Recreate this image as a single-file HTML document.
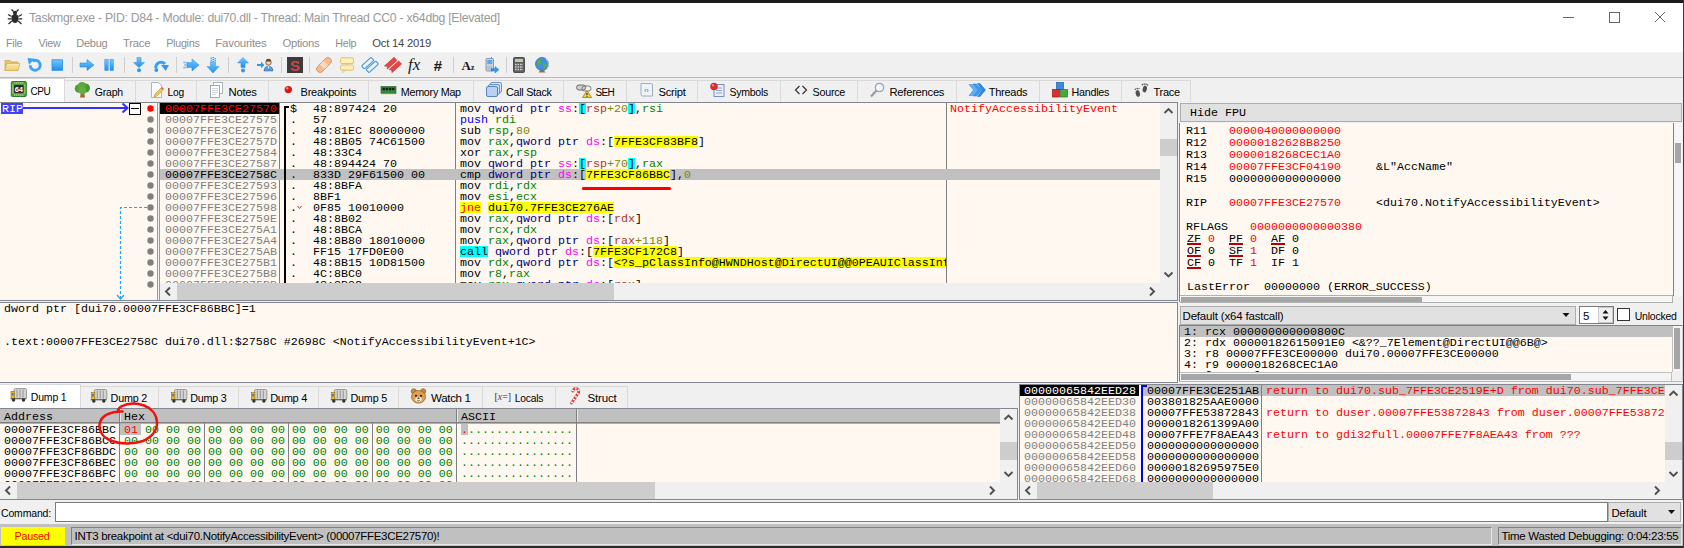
<!DOCTYPE html><html><head><meta charset="utf-8"><title>x64dbg</title><style>
*{box-sizing:border-box;margin:0;padding:0}
html,body{width:1684px;height:548px;overflow:hidden;background:#f0f0f0}
body{position:relative;font-family:"Liberation Sans",sans-serif;font-size:12px;color:#000}
.a{position:absolute}
.m{font-family:"Liberation Mono",monospace;font-size:11.67px;line-height:11px;white-space:pre;letter-spacing:0}
.r{position:absolute;height:11px;line-height:11px;white-space:pre}
.ui{font-family:"Liberation Sans",sans-serif;font-size:12px;white-space:pre}
.tab{position:absolute;top:80px;height:22px;background:#f0f0f0;border:1px solid #d9d9d9;border-bottom:none}
.tab.act{top:78px;height:25px;background:#fff;border-color:#d9d9d9}
.tl{position:absolute;top:8px;font-size:12px;line-height:14px;white-space:pre}
.red{color:#ff0000}.gr{color:#808080}.bl{color:#000}
.y{background:#ffff00}.c{background:#00ffff}
.br{color:#b03434}.k{color:#000080}.rg{color:#008300}.sg{color:#ff00ff}.nm{color:#828200}.pp{color:#0000ff}
.sb{position:absolute;background:#f0f0f0}
.th{position:absolute;background:#cdcdcd}
svg{position:absolute;overflow:visible}
</style></head><body>
<div class="a" style="left:0;top:0;width:1684px;height:3px;background:#1b1b1b"></div>
<div class="a" style="left:0;top:3px;width:1684px;height:50px;background:#fff"></div>
<div class="a" style="left:0;top:52px;width:1684px;height:1px;background:#f5f5f5"></div>
<div class="a ui" style="left:29px;top:10px;font-size:12.25px;line-height:14px;color:#9a9a9a;letter-spacing:-0.268px;line-height:16px;">Taskmgr.exe - PID: D84 - Module: dui70.dll - Thread: Main Thread CC0 - x64dbg [Elevated]</div>
<svg style="left:7px;top:9px" width="16" height="16"><g fill="#2b2b2b" stroke="#2b2b2b"><ellipse cx="8" cy="9.5" rx="3.6" ry="4.6" stroke="none"/><circle cx="8" cy="3.8" r="2.1" stroke="none"/><path d="M4.6 7.5L1 5.5M4.4 9.8H0.8M4.8 12L1.5 15M11.400 7.500L15 5.500M11.600 9.800H15.200M11.200 12L14.500 15M6.500 2.500L4.500 0.500M9.500 2.500L11.500 0.500" stroke-width="1.300" fill="none"/></g></svg>
<svg style="left:1559px;top:8px" width="110" height="20" shape-rendering="crispEdges"><g stroke="#666" stroke-width="1" fill="none"><path d="M4 9.500H15"/><rect x="50.500" y="4.500" width="10" height="10"/></g><path d="M96 4L106 14M106 4L96 14" stroke="#666" stroke-width="1" fill="none" shape-rendering="auto"/></svg>
<div class="a ui" style="left:6px;top:36px;font-size:10.75px;line-height:14px;color:#8e8e8e;letter-spacing:-0.281px;">File</div>
<div class="a ui" style="left:38.5px;top:36px;font-size:10.75px;line-height:14px;color:#8e8e8e;letter-spacing:-0.277px;">View</div>
<div class="a ui" style="left:76.3px;top:36px;font-size:11.0px;line-height:14px;color:#8e8e8e;letter-spacing:-0.243px;">Debug</div>
<div class="a ui" style="left:123px;top:36px;font-size:11.25px;line-height:14px;color:#8e8e8e;letter-spacing:-0.208px;">Trace</div>
<div class="a ui" style="left:166.2px;top:36px;font-size:10.75px;line-height:14px;color:#8e8e8e;letter-spacing:-0.280px;">Plugins</div>
<div class="a ui" style="left:215.3px;top:36px;font-size:11.5px;line-height:14px;color:#8e8e8e;letter-spacing:-0.249px;">Favourites</div>
<div class="a ui" style="left:282.4px;top:36px;font-size:11.25px;line-height:14px;color:#8e8e8e;letter-spacing:-0.253px;">Options</div>
<div class="a ui" style="left:335.3px;top:36px;font-size:10.75px;line-height:14px;color:#8e8e8e;letter-spacing:-0.277px;">Help</div>
<div class="a ui" style="left:372.3px;top:36px;font-size:11.25px;line-height:14px;color:#444;letter-spacing:-0.227px;">Oct 14 2019</div>
<div class="a" style="left:0;top:53px;width:1684px;height:24px;background:#f0f0f0"></div>
<div class="a" style="left:0;top:77px;width:1684px;height:1px;background:#b8b8b8"></div>
<div class="a" style="left:72px;top:57px;width:1px;height:16px;background:#cfcfcf;"></div>
<div class="a" style="left:124px;top:57px;width:1px;height:16px;background:#cfcfcf;"></div>
<div class="a" style="left:176px;top:57px;width:1px;height:16px;background:#cfcfcf;"></div>
<div class="a" style="left:228px;top:57px;width:1px;height:16px;background:#cfcfcf;"></div>
<div class="a" style="left:281px;top:57px;width:1px;height:16px;background:#cfcfcf;"></div>
<div class="a" style="left:309px;top:57px;width:1px;height:16px;background:#cfcfcf;"></div>
<div class="a" style="left:453px;top:57px;width:1px;height:16px;background:#cfcfcf;"></div>
<div class="a" style="left:506px;top:57px;width:1px;height:16px;background:#cfcfcf;"></div>
<svg style="left:0;top:0" width="1684" height="548"><defs><linearGradient id="gb" x1="0" y1="0" x2="0" y2="1"><stop offset="0" stop-color="#74c8ff"/><stop offset="1" stop-color="#1e8ef0"/></linearGradient><linearGradient id="gf" x1="0" y1="0" x2="0" y2="1"><stop offset="0" stop-color="#fbe9b0"/><stop offset="1" stop-color="#efcf7a"/></linearGradient></defs><g transform="translate(4,57)"><path d="M1 3.500h5l1.500 1.500H14v8.500H1z" fill="#e6c36c" stroke="#cfa94e" stroke-width="0.800"/><path d="M0.800 13.500L3 6.500H16l-2.200 7z" fill="url(#gf)" stroke="#d4b05a" stroke-width="0.800"/></g><g transform="translate(27,57)"><path d="M3.200 8.200a5 5 0 1 0 2.200-4.100" fill="none" stroke="#3aa2f4" stroke-width="2.800"/><path d="M0.500 1l7 0.800L2 7.800z" fill="#3aa2f4"/></g><g transform="translate(49,57)"><rect x="3" y="2.800" width="10.500" height="10.500" fill="url(#gb)" stroke="#2a8ee0" stroke-width="0.800"/></g><g transform="translate(79,57)"><path d="M1 6h7V2.500L15 8l-7 5.500V10H1z" fill="url(#gb)" stroke="#2a8ee0" stroke-width="0.600"/></g><g transform="translate(101,57)"><rect x="3.800" y="2.500" width="3.400" height="11" fill="url(#gb)" stroke="#2a8ee0" stroke-width="0.500"/><rect x="9" y="2.500" width="3.400" height="11" fill="url(#gb)" stroke="#2a8ee0" stroke-width="0.500"/></g><g transform="translate(131,57)"><path d="M6 0.500h4v5h3.500L8 10.500 2.500 5.500H6z" fill="url(#gb)" stroke="#2a8ee0" stroke-width="0.500"/><circle cx="8" cy="13.300" r="2" fill="#2e98f2"/></g><g transform="translate(153,57)"><path d="M2.800 11a5.300 5.300 0 0 1 9.200-4" fill="none" stroke="#3aa2f4" stroke-width="3"/><path d="M8 8h8l-3.200 6z" fill="#2e98f2"/><circle cx="3.300" cy="13" r="2" fill="#2e98f2"/></g><g transform="translate(183,57)"><path d="M4 5.500h5V2L16 8l-7 6V10.500H4z" fill="url(#gb)" stroke="#2a8ee0" stroke-width="0.500"/><path d="M0.500 5.500h3M1.500 8h3M0.500 10.500h3" stroke="#3aa2f4" stroke-width="1.600" stroke-dasharray="1.200 0.800"/></g><g transform="translate(205,57)"><path d="M5.500 5h5v4.500h3.500L8 16 2 9.500h3.500z" fill="url(#gb)" stroke="#2a8ee0" stroke-width="0.500"/><path d="M6.300 0.500v4.500M8.300 0v5M10.300 1v4" stroke="#3aa2f4" stroke-width="1.500" stroke-dasharray="1.200 0.800"/></g><g transform="translate(235,57)"><path d="M6 10.500V6H2.500L8 0.500l5.500 5.500H10v4.500z" fill="url(#gb)" stroke="#2a8ee0" stroke-width="0.500"/><circle cx="8" cy="13.500" r="2" fill="#2e98f2"/></g><g transform="translate(257,57)"><path d="M0 7h4V4.800l3.500 3.200L4 11.200V9H0z" fill="#2e98f2"/><circle cx="11.500" cy="5.500" r="2.700" fill="#f0d2ac" stroke="#6a4a2a" stroke-width="0.800"/><path d="M8.800 4.500a2.700 2.700 0 0 1 5.400 0z" fill="#6a4426"/><path d="M7 14c0-3.500 2-4.800 4.500-4.800S16 10.500 16 14z" fill="#5a9ae0" stroke="#2c5f9e" stroke-width="0.500"/><path d="M10.500 9.500l1 2.500 1-2.500z" fill="#fff"/></g><g transform="translate(287,57)"><rect x="0" y="0" width="16" height="16" fill="#3e3a3a"/><text x="8" y="13.500" font-family="Liberation Sans,sans-serif" font-weight="bold" font-size="15" fill="#c8484c" text-anchor="middle">S</text></g><g transform="translate(316,57) rotate(-45 8 8)"><rect x="-1" y="4.500" width="18" height="7" rx="3.400" fill="#f4bc90" stroke="#d48e5a" stroke-width="0.800"/><rect x="5.500" y="4.800" width="5" height="6.400" fill="#f9dcc0"/></g><g transform="translate(338,57)"><rect x="2.500" y="0.800" width="13" height="5.800" rx="1.500" fill="#fdf0b8" stroke="#d8b45a" stroke-width="0.800"/><rect x="2.500" y="8" width="13" height="5.200" rx="1.500" fill="#fdf0b8" stroke="#d8b45a" stroke-width="0.800"/><path d="M5 13.200v2.500L7.500 13.200z" fill="#fdf0b8" stroke="#d8b45a" stroke-width="0.600"/><path d="M9 6.600v1.400" stroke="#d8b45a" stroke-width="1"/></g><g transform="translate(362,57) rotate(-42 8 8)"><rect x="1" y="3" width="13" height="4.200" rx="1" fill="#e8f4fc" stroke="#3f96dc" stroke-width="1.100"/><rect x="2" y="8.800" width="13" height="4.200" rx="1" fill="#e8f4fc" stroke="#3f96dc" stroke-width="1.100"/></g><g transform="translate(385,57) rotate(-42 8 8)"><path d="M1 3h13v4.200H1l1.800-2.100z" fill="#e84444" stroke="#c02222" stroke-width="0.500"/><path d="M2 8.800h13V13H2l1.800-2.100z" fill="#e84444" stroke="#c02222" stroke-width="0.500"/></g><text x="408" y="69.5" font-family="Liberation Serif,serif" font-style="italic" font-size="17" fill="#1a1a1a">fx</text><text x="433.5" y="70.5" font-family="Liberation Sans,sans-serif" font-style="italic" font-weight="bold" font-size="15" fill="#1a1a1a">#</text><text x="461.5" y="70" font-family="Liberation Serif,serif" font-weight="bold" font-size="13" fill="#1a1a1a">A<tspan font-size="7.500">z</tspan></text><g transform="translate(483,57)"><path d="M8.500 0v2" stroke="#7388a0" stroke-width="1"/><rect x="3" y="1.500" width="7.500" height="12.500" rx="1" fill="#c9d6e2" stroke="#7388a0" stroke-width="0.800"/><rect x="4.300" y="3" width="5" height="4" fill="#5aa8ea"/><path d="M4.500 9h4.500M4.500 10.500h4.500M4.500 12h4.500" stroke="#8a9ab0" stroke-width="0.800" stroke-dasharray="1 0.700"/><path d="M8 11.500h4V9.500l4 3.200-4 3.300v-2H8z" fill="#2e98f2" stroke="#1a72c8" stroke-width="0.400"/></g><g transform="translate(511,57)"><rect x="2.500" y="0.500" width="11" height="15" rx="1" fill="#5e5e5e" stroke="#3a3a3a" stroke-width="0.800"/><rect x="4" y="2" width="8" height="3" fill="#b8d0a8"/><path d="M4 7.500h8M4 10h8M4 12.500h8" stroke="#cfcfcf" stroke-width="1.400" stroke-dasharray="1.700 0.800"/></g><g transform="translate(534,57)"><path d="M4.500 15.500h7L10 13.500H6z" fill="#b0642a"/><circle cx="8" cy="7" r="6.500" fill="#3f8ee0" stroke="#2463a8" stroke-width="0.700"/><path d="M3.500 3.500c2-1.500 4-.5 4 1.500S5.500 7 5 9 2.500 7 3.500 3.500zM9 6.500c2-.5 4 .5 3.500 2.500S10.500 12.500 9 11z" fill="#59b045"/><path d="M12 2a7.500 7.500 0 0 1 1 10" fill="none" stroke="#c8c8c8" stroke-width="1"/></g></svg>
<div class="a" style="left:0;top:102px;width:1178px;height:1px;background:#828790"></div>
<div class="a" style="left:0px;top:78px;width:65px;height:24px;background:#fff;border:1px solid #d9d9d9;border-bottom:none;border-left:none"></div>
<div class="a ui" style="left:30.6px;top:85px;font-size:10.0px;line-height:14px;color:#000;letter-spacing:-0.505px;">CPU</div>
<div class="a" style="left:64px;top:80px;width:72px;height:22px;background:#f0f0f0;border:1px solid #d9d9d9;border-bottom:none"></div>
<div class="a ui" style="left:94.8px;top:85px;font-size:10.5px;line-height:14px;color:#000;letter-spacing:-0.197px;">Graph</div>
<div class="a" style="left:135px;top:80px;width:62px;height:22px;background:#f0f0f0;border:1px solid #d9d9d9;border-bottom:none"></div>
<div class="a ui" style="left:167.5px;top:86px;font-size:10.25px;line-height:14px;color:#000;letter-spacing:-0.201px;">Log</div>
<div class="a" style="left:196px;top:80px;width:73px;height:22px;background:#f0f0f0;border:1px solid #d9d9d9;border-bottom:none"></div>
<div class="a ui" style="left:228.6px;top:85px;font-size:11.25px;line-height:14px;color:#000;letter-spacing:-0.298px;">Notes</div>
<div class="a" style="left:268px;top:80px;width:101px;height:22px;background:#f0f0f0;border:1px solid #d9d9d9;border-bottom:none"></div>
<div class="a ui" style="left:300.5px;top:85px;font-size:11.0px;line-height:14px;color:#000;letter-spacing:-0.208px;">Breakpoints</div>
<div class="a" style="left:368px;top:80px;width:106px;height:22px;background:#f0f0f0;border:1px solid #d9d9d9;border-bottom:none"></div>
<div class="a ui" style="left:400.8px;top:85px;font-size:10.75px;line-height:14px;color:#000;letter-spacing:-0.272px;">Memory Map</div>
<div class="a" style="left:473px;top:80px;width:91px;height:22px;background:#f0f0f0;border:1px solid #d9d9d9;border-bottom:none"></div>
<div class="a ui" style="left:506px;top:85px;font-size:10.75px;line-height:14px;color:#000;letter-spacing:-0.269px;">Call Stack</div>
<div class="a" style="left:563px;top:80px;width:64px;height:22px;background:#f0f0f0;border:1px solid #d9d9d9;border-bottom:none"></div>
<div class="a ui" style="left:595.6px;top:86px;font-size:10.0px;line-height:14px;color:#000;letter-spacing:-0.721px;">SEH</div>
<div class="a" style="left:626px;top:80px;width:72px;height:22px;background:#f0f0f0;border:1px solid #d9d9d9;border-bottom:none"></div>
<div class="a ui" style="left:658.5px;top:85px;font-size:11.25px;line-height:14px;color:#000;letter-spacing:-0.276px;">Script</div>
<div class="a" style="left:697px;top:80px;width:84px;height:22px;background:#f0f0f0;border:1px solid #d9d9d9;border-bottom:none"></div>
<div class="a ui" style="left:729.6px;top:85px;font-size:10.5px;line-height:14px;color:#000;letter-spacing:-0.266px;">Symbols</div>
<div class="a" style="left:780px;top:80px;width:78px;height:22px;background:#f0f0f0;border:1px solid #d9d9d9;border-bottom:none"></div>
<div class="a ui" style="left:812.6px;top:85px;font-size:10.75px;line-height:14px;color:#000;letter-spacing:-0.277px;">Source</div>
<div class="a" style="left:857px;top:80px;width:100px;height:22px;background:#f0f0f0;border:1px solid #d9d9d9;border-bottom:none"></div>
<div class="a ui" style="left:889.5px;top:85px;font-size:11.25px;line-height:14px;color:#000;letter-spacing:-0.283px;">References</div>
<div class="a" style="left:956px;top:80px;width:84px;height:22px;background:#f0f0f0;border:1px solid #d9d9d9;border-bottom:none"></div>
<div class="a ui" style="left:988.8px;top:85px;font-size:11.0px;line-height:14px;color:#000;letter-spacing:-0.265px;">Threads</div>
<div class="a" style="left:1039px;top:80px;width:83px;height:22px;background:#f0f0f0;border:1px solid #d9d9d9;border-bottom:none"></div>
<div class="a ui" style="left:1071.4px;top:85px;font-size:10.75px;line-height:14px;color:#000;letter-spacing:-0.235px;">Handles</div>
<div class="a" style="left:1121px;top:80px;width:70px;height:22px;background:#f0f0f0;border:1px solid #d9d9d9;border-bottom:none"></div>
<div class="a ui" style="left:1153.5px;top:85px;font-size:11.0px;line-height:14px;color:#000;letter-spacing:-0.242px;">Trace</div>
<svg style="left:0;top:0" width="1684" height="548"><g transform="translate(10.8,81)"><rect x="0.500" y="0.500" width="15" height="15" rx="1" fill="#3fa045" stroke="#2a7a30"/><path d="M3.500 2h10M3.500 14h10" stroke="#e8df8a" stroke-width="1.400" stroke-dasharray="1 1"/><path d="M2 3.500v10M14 3.500v10" stroke="#e8df8a" stroke-width="1.400" stroke-dasharray="1 1"/><rect x="3.200" y="4" width="9.600" height="8" rx="1" fill="#2c2c2c"/><text x="8" y="10.800" font-size="7.500" font-weight="bold" font-family="Liberation Sans,sans-serif" fill="#fff" text-anchor="middle">64</text></g><g transform="translate(74.5,82)"><path d="M6.500 10h3l1 5.500h-5z" fill="#a0682d"/><circle cx="4.500" cy="6.500" r="4.300" fill="#4f9e34"/><circle cx="11" cy="6" r="4.500" fill="#4a962f"/><circle cx="7.500" cy="4" r="4" fill="#5aa83a"/><circle cx="8" cy="8.500" r="3.800" fill="#62b042"/></g><g transform="translate(149,82)"><path d="M2.500 0.500h7l3 3v12h-10z" fill="#fbfbfb" stroke="#9aa5b0" stroke-width="0.8"/><path d="M5 15l1-3 6-6 2 2-6 6z" fill="#f2c84b" stroke="#a8842a" stroke-width="0.5"/><path d="M12 6l1-1 2 2-1 1z" fill="#e05a5a"/></g><g transform="translate(209,82)"><rect x="4.500" y="0.500" width="9" height="11" fill="#fff" stroke="#9aa5b0" stroke-width="0.8"/><rect x="1.500" y="3.500" width="9" height="12" fill="#fdfdfd" stroke="#8a95a0" stroke-width="0.8"/><path d="M3 6.500h6M3 8.500h6M3 10.500h6M3 12.500h4" stroke="#b8c2cc" stroke-width="0.7"/></g><g transform="translate(280,82)"><circle cx="8.300" cy="7.600" r="3.700" fill="#d81818"/><circle cx="7.200" cy="6.300" r="1.200" fill="#ff8080"/></g><g transform="translate(380.5,82)"><rect x="0.500" y="4.500" width="15" height="7" fill="#2f8a3a" stroke="#1f5f27" stroke-width="0.6"/><path d="M2 7h12.500" stroke="#1c1c1c" stroke-width="2.600" stroke-dasharray="2.400 0.800"/><path d="M1 12h14" stroke="#d8c86a" stroke-width="1" stroke-dasharray="1 1"/></g><g transform="translate(486,82)"><rect x="4.500" y="0.500" width="11" height="10" rx="1.500" fill="#dfe9f7" stroke="#5a86c8" stroke-width="0.9"/><rect x="2.500" y="2.500" width="11" height="10" rx="1.500" fill="#cfe0f5" stroke="#5a86c8" stroke-width="0.9"/><rect x="0.500" y="4.500" width="11" height="10" rx="1.500" fill="#b9d2f0" stroke="#4a76b8" stroke-width="0.9"/></g><g transform="translate(576,82)"><rect x="0.600" y="3" width="9" height="5" rx="2.400" fill="#d0d0d0" stroke="#6a6a6a" stroke-width="1"/><rect x="6" y="4" width="9" height="5" rx="2.400" fill="none" stroke="#7a7a7a" stroke-width="1"/><path d="M11 8.500l4.500 7h-9z" fill="#f6d33a" stroke="#8a6a10" stroke-width="0.700"/><path d="M11 11v2.200M11 14v0.800" stroke="#222" stroke-width="1.100"/></g><g transform="translate(638.5,82)"><path d="M2.500 1.500h10q1.500 0 1.500 1.500v11h-10q-1.500 0-1.500-1.500z" fill="#eef3f9" stroke="#8a9ab0" stroke-width="0.8"/><text x="8" y="11" font-size="6.500" font-family="Liberation Sans,sans-serif" fill="#556" text-anchor="middle">‹›</text></g><g transform="translate(709.5,82)"><rect x="4.500" y="2.500" width="10" height="12" fill="#e8effa" stroke="#5a78b8" stroke-width="0.8"/><path d="M6.500 6h6M6.500 8.500h6M6.500 11h6" stroke="#7a92c8" stroke-width="0.8"/><circle cx="4.500" cy="4.500" r="3.800" fill="#d83030"/><circle cx="3.500" cy="3.300" r="1.100" fill="#ff9a9a"/></g><g transform="translate(793,82)"><path d="M6.500 4L2.500 8 6.500 12M9.500 4L13.500 8 9.500 12" fill="none" stroke="#333" stroke-width="1.200"/></g><g transform="translate(870,82)"><circle cx="9.500" cy="5.500" r="4.200" fill="#f2f6fa" stroke="#9aa5b0" stroke-width="1.200"/><path d="M6.500 8.500L1 14.500" stroke="#9a9a9a" stroke-width="2.200"/></g><g transform="translate(969,82)"><path d="M0 2.500h3.500l5 5.500-5 5.500H0l4.500-5.500z" fill="#5ab4f8" stroke="#2a86d8" stroke-width="0.500"/><path d="M4 2h3.500l5.500 6-5.500 6H4l5-6z" fill="#3a9af0" stroke="#1f72c4" stroke-width="0.500"/><path d="M8.500 1.500h2.500l5.500 6.500-5.500 6.500H8.500l5-6.500z" fill="#2a8ae8" stroke="#1a62b4" stroke-width="0.500"/></g><g transform="translate(1052,82)"><rect x="4.500" y="0.500" width="7" height="7" fill="#3a8ae0" stroke="#1f5fa8" stroke-width="0.700"/><rect x="0.500" y="7.500" width="7" height="7.500" fill="#d83030" stroke="#981818" stroke-width="0.700"/><rect x="8.500" y="7.500" width="7" height="7.500" fill="#4aa83a" stroke="#2a7820" stroke-width="0.700"/></g><g transform="translate(1134,82)"><ellipse cx="3.800" cy="11.500" rx="2.100" ry="3.400" fill="#505050" transform="rotate(-12 3.800 11.500)"/><ellipse cx="10.800" cy="7" rx="2.100" ry="3.400" fill="#505050" transform="rotate(12 10.800 7)"/><circle cx="1.300" cy="7.300" r="0.800" fill="#505050"/><circle cx="3.200" cy="6.600" r="0.800" fill="#505050"/><circle cx="5" cy="6.600" r="0.700" fill="#505050"/><circle cx="8.500" cy="2.600" r="0.800" fill="#505050"/><circle cx="10.300" cy="2" r="0.800" fill="#505050"/><circle cx="12.100" cy="2.200" r="0.800" fill="#505050"/><circle cx="13.600" cy="3" r="0.700" fill="#505050"/></g></svg>
<div class="a" style="left:0;top:103px;width:1177px;height:197px;background:#fff8f0"></div>
<div class="a" style="left:157px;top:103px;width:1px;height:197px;background:#9a9a9a;"></div>
<div class="a" style="left:158px;top:103px;width:1px;height:197px;background:#f0f0f0;"></div>
<div class="a" style="left:159px;top:103px;width:1px;height:197px;background:#9a9a9a;"></div>
<div class="a" style="left:279px;top:103px;width:1px;height:180px;background:#808080;"></div>
<div class="a" style="left:455px;top:103px;width:1px;height:180px;background:#808080;"></div>
<div class="a" style="left:946px;top:103px;width:1px;height:180px;background:#808080;"></div>
<div class="a" style="left:160px;top:169px;width:1000px;height:11px;background:#c0c0c0;"></div>
<div class="a" style="left:160px;top:103px;width:119px;height:11px;background:#000;"></div>
<div class="a" style="left:0;top:103px;width:1160px;height:180px;overflow:hidden">
<div class="r m red" style="left:165px;top:1px;">00007FFE3CE27570</div>
<div class="r m bl" style="left:290px;top:1px;">$</div>
<div class="r m bl" style="left:313px;top:1px;">48:897424 20</div>
<div class="r m red" style="left:950px;top:1px;">NotifyAccessibilityEvent</div>
<div class="r m gr" style="left:165px;top:12px;">00007FFE3CE27575</div>
<div class="r m bl" style="left:290px;top:12px;">.</div>
<div class="r m bl" style="left:313px;top:12px;">57</div>
<div class="r m gr" style="left:165px;top:23px;">00007FFE3CE27576</div>
<div class="r m bl" style="left:290px;top:23px;">.</div>
<div class="r m bl" style="left:313px;top:23px;">48:81EC 80000000</div>
<div class="r m gr" style="left:165px;top:34px;">00007FFE3CE2757D</div>
<div class="r m bl" style="left:290px;top:34px;">.</div>
<div class="r m bl" style="left:313px;top:34px;">48:8B05 74C61500</div>
<div class="r m gr" style="left:165px;top:45px;">00007FFE3CE27584</div>
<div class="r m bl" style="left:290px;top:45px;">.</div>
<div class="r m bl" style="left:313px;top:45px;">48:33C4</div>
<div class="r m gr" style="left:165px;top:56px;">00007FFE3CE27587</div>
<div class="r m bl" style="left:290px;top:56px;">.</div>
<div class="r m bl" style="left:313px;top:56px;">48:894424 70</div>
<div class="r m bl" style="left:165px;top:67px;">00007FFE3CE2758C</div>
<div class="r m bl" style="left:290px;top:67px;">.</div>
<div class="r m bl" style="left:313px;top:67px;">833D 29F61500 00</div>
<div class="r m gr" style="left:165px;top:78px;">00007FFE3CE27593</div>
<div class="r m bl" style="left:290px;top:78px;">.</div>
<div class="r m bl" style="left:313px;top:78px;">48:8BFA</div>
<div class="r m gr" style="left:165px;top:89px;">00007FFE3CE27596</div>
<div class="r m bl" style="left:290px;top:89px;">.</div>
<div class="r m bl" style="left:313px;top:89px;">8BF1</div>
<div class="r m gr" style="left:165px;top:100px;">00007FFE3CE27598</div>
<div class="r m bl" style="left:290px;top:100px;">.</div>
<div class="r m bl" style="left:313px;top:100px;">0F85 10010000</div>
<div class="r m gr" style="left:165px;top:111px;">00007FFE3CE2759E</div>
<div class="r m bl" style="left:290px;top:111px;">.</div>
<div class="r m bl" style="left:313px;top:111px;">48:8B02</div>
<div class="r m gr" style="left:165px;top:122px;">00007FFE3CE275A1</div>
<div class="r m bl" style="left:290px;top:122px;">.</div>
<div class="r m bl" style="left:313px;top:122px;">48:8BCA</div>
<div class="r m gr" style="left:165px;top:133px;">00007FFE3CE275A4</div>
<div class="r m bl" style="left:290px;top:133px;">.</div>
<div class="r m bl" style="left:313px;top:133px;">48:8B80 18010000</div>
<div class="r m gr" style="left:165px;top:144px;">00007FFE3CE275AB</div>
<div class="r m bl" style="left:290px;top:144px;">.</div>
<div class="r m bl" style="left:313px;top:144px;">FF15 17FD0E00</div>
<div class="r m gr" style="left:165px;top:155px;">00007FFE3CE275B1</div>
<div class="r m bl" style="left:290px;top:155px;">.</div>
<div class="r m bl" style="left:313px;top:155px;">48:8B15 10D81500</div>
<div class="r m gr" style="left:165px;top:166px;">00007FFE3CE275B8</div>
<div class="r m bl" style="left:290px;top:166px;">.</div>
<div class="r m bl" style="left:313px;top:166px;">4C:8BC0</div>
<div class="r m gr" style="left:165px;top:177px;">00007FFE3CE275BB</div>
<div class="r m bl" style="left:290px;top:177px;">.</div>
<div class="r m bl" style="left:313px;top:177px;">48:8B02</div>
</div>
<div class="a" style="left:460px;top:103px;width:486px;height:180px;overflow:hidden"><div class="a" style="left:119px;top:0px;width:7px;height:11px;background:#00ffff;"></div><div class="a" style="left:168px;top:0px;width:7px;height:11px;background:#00ffff;"></div><div class="r m " style="left:0px;top:1px;"><span class="bl">mov </span><span class="k">qword ptr </span><span class="sg">ss</span><span class="bl">:</span><span class="bl">[</span><span class="br">rsp</span><span class="nm">+20</span><span class="bl">]</span><span class="bl">,</span><span class="rg">rsi</span></div><div class="r m " style="left:0px;top:12px;"><span class="pp">push </span><span class="rg">rdi</span></div><div class="r m " style="left:0px;top:23px;"><span class="bl">sub </span><span class="rg">rsp</span><span class="bl">,</span><span class="nm">80</span></div><div class="a" style="left:154px;top:33px;width:84px;height:11px;background:#ffff00;"></div><div class="r m " style="left:0px;top:34px;"><span class="bl">mov </span><span class="rg">rax</span><span class="bl">,</span><span class="k">qword ptr </span><span class="sg">ds</span><span class="bl">:</span><span class="bl">[</span><span class="bl">7FFE3CF83BF8</span><span class="bl">]</span></div><div class="r m " style="left:0px;top:45px;"><span class="bl">xor </span><span class="rg">rax</span><span class="bl">,</span><span class="rg">rsp</span></div><div class="a" style="left:119px;top:55px;width:7px;height:11px;background:#00ffff;"></div><div class="a" style="left:168px;top:55px;width:7px;height:11px;background:#00ffff;"></div><div class="r m " style="left:0px;top:56px;"><span class="bl">mov </span><span class="k">qword ptr </span><span class="sg">ss</span><span class="bl">:</span><span class="bl">[</span><span class="br">rsp</span><span class="nm">+70</span><span class="bl">]</span><span class="bl">,</span><span class="rg">rax</span></div><div class="a" style="left:126px;top:66px;width:84px;height:11px;background:#ffff00;"></div><div class="r m " style="left:0px;top:67px;"><span class="bl">cmp </span><span class="k">dword ptr </span><span class="sg">ds</span><span class="bl">:</span><span class="bl">[</span><span class="bl">7FFE3CF86BBC</span><span class="bl">]</span><span class="bl">,</span><span class="nm">0</span></div><div class="r m " style="left:0px;top:78px;"><span class="bl">mov </span><span class="rg">rdi</span><span class="bl">,</span><span class="rg">rdx</span></div><div class="r m " style="left:0px;top:89px;"><span class="bl">mov </span><span class="rg">esi</span><span class="bl">,</span><span class="rg">ecx</span></div><div class="a" style="left:0px;top:99px;width:21px;height:11px;background:#ffff00;"></div><div class="a" style="left:28px;top:99px;width:126px;height:11px;background:#ffff00;"></div><div class="r m " style="left:0px;top:100px;"><span class="red">jne</span><span class="bl"> </span><span class="bl">dui70.7FFE3CE276AE</span></div><div class="r m " style="left:0px;top:111px;"><span class="bl">mov </span><span class="rg">rax</span><span class="bl">,</span><span class="k">qword ptr </span><span class="sg">ds</span><span class="bl">:</span><span class="bl">[</span><span class="br">rdx</span><span class="bl">]</span></div><div class="r m " style="left:0px;top:122px;"><span class="bl">mov </span><span class="rg">rcx</span><span class="bl">,</span><span class="rg">rdx</span></div><div class="r m " style="left:0px;top:133px;"><span class="bl">mov </span><span class="rg">rax</span><span class="bl">,</span><span class="k">qword ptr </span><span class="sg">ds</span><span class="bl">:</span><span class="bl">[</span><span class="br">rax</span><span class="nm">+118</span><span class="bl">]</span></div><div class="a" style="left:0px;top:143px;width:28px;height:11px;background:#00ffff;"></div><div class="a" style="left:133px;top:143px;width:84px;height:11px;background:#ffff00;"></div><div class="r m " style="left:0px;top:144px;"><span class="bl">call</span><span class="bl"> </span><span class="k">qword ptr </span><span class="sg">ds</span><span class="bl">:</span><span class="bl">[</span><span class="bl">7FFE3CF172C8</span><span class="bl">]</span></div><div class="a" style="left:154px;top:154px;width:336px;height:11px;background:#ffff00;"></div><div class="r m " style="left:0px;top:155px;"><span class="bl">mov </span><span class="rg">rdx</span><span class="bl">,</span><span class="k">qword ptr </span><span class="sg">ds</span><span class="bl">:</span><span class="bl">[</span><span class="bl">&lt;?s_pClassInfo@HWNDHost@DirectUI@@0PEAUIClassInf</span></div><div class="r m " style="left:0px;top:166px;"><span class="bl">mov </span><span class="rg">r8</span><span class="bl">,</span><span class="rg">rax</span></div><div class="r m " style="left:0px;top:177px;"><span class="bl">mov </span><span class="rg">rax</span><span class="bl">,</span><span class="k">qword ptr </span><span class="sg">ds</span><span class="bl">:</span><span class="bl">[</span><span class="br">rax</span><span class="bl">]</span></div></div>
<div class="a" style="left:1px;top:103px;width:22px;height:11px;background:#4040ff;"></div>
<div class="r m " style="left:2px;top:104px;color:#fff">RIP</div>
<div class="a" style="left:1160px;top:103px;width:17px;height:197px;background:#f0f0f0;"></div>
<div class="a" style="left:1160px;top:139px;width:17px;height:17px;background:#cdcdcd;"></div>
<div class="a" style="left:160px;top:283px;width:1000px;height:17px;background:#f0f0f0;"></div>
<div class="a" style="left:177px;top:283px;width:437px;height:17px;background:#cdcdcd;"></div>
<div class="a" style="left:1177px;top:102px;width:1px;height:199px;background:#828790;"></div>
<div class="a" style="left:0px;top:300px;width:1178px;height:1px;background:#828790;"></div>
<svg style="left:0;top:0" width="1684" height="548"><path d="M297.500 206l2 2.500 2-2.500" stroke="#e02020" stroke-width="1" fill="none"/><path d="M23 108H127" stroke="#3030ff" stroke-width="2"/><path d="M122.500 103.500L127.500 108L122.500 112.500" stroke="#3030ff" stroke-width="2" fill="none"/><g shape-rendering="crispEdges"><rect x="129.500" y="103.500" width="11" height="11" fill="#fff" stroke="#000"/><path d="M131 108.500H139" stroke="#000" stroke-width="1"/></g><circle cx="150.500" cy="108.5" r="3.200" fill="#ff0000"/><circle cx="150.500" cy="119.5" r="3.200" fill="#808080"/><circle cx="150.500" cy="130.5" r="3.200" fill="#808080"/><circle cx="150.500" cy="141.5" r="3.200" fill="#808080"/><circle cx="150.500" cy="152.5" r="3.200" fill="#808080"/><circle cx="150.500" cy="163.5" r="3.200" fill="#808080"/><circle cx="150.500" cy="174.5" r="3.200" fill="#808080"/><circle cx="150.500" cy="185.5" r="3.200" fill="#808080"/><circle cx="150.500" cy="196.5" r="3.200" fill="#808080"/><circle cx="150.500" cy="207.5" r="3.200" fill="#808080"/><circle cx="150.500" cy="218.5" r="3.200" fill="#808080"/><circle cx="150.500" cy="229.5" r="3.200" fill="#808080"/><circle cx="150.500" cy="240.5" r="3.200" fill="#808080"/><circle cx="150.500" cy="251.5" r="3.200" fill="#808080"/><circle cx="150.500" cy="262.5" r="3.200" fill="#808080"/><circle cx="150.500" cy="273.5" r="3.200" fill="#808080"/><circle cx="150.500" cy="284.5" r="3.200" fill="#808080"/><path d="M147 207.500H120.500V298" stroke="#18a8ff" stroke-width="1.200" stroke-dasharray="3 2" fill="none"/><path d="M117 295L120.500 299L124 295" stroke="#18a8ff" stroke-width="1.200" fill="none"/><path d="M289 107H285V283" stroke="#000" stroke-width="2" fill="none" shape-rendering="crispEdges"/><path d="M583.500 188.500H669.500" stroke="#ff0000" stroke-width="3.200" fill="none" stroke-linecap="round"/><path d="M1164.5 113L1168.5 109L1172.5 113" stroke="#505050" stroke-width="1.900" fill="none"/><path d="M1164.5 272.5L1168.5 276.5L1172.5 272.5" stroke="#505050" stroke-width="1.900" fill="none"/><path d="M170 287.5L166 291.5L170 295.5" stroke="#505050" stroke-width="1.900" fill="none"/><path d="M1150 287.5L1154 291.5L1150 295.5" stroke="#505050" stroke-width="1.900" fill="none"/></svg>
<div class="a" style="left:1180px;top:103px;width:502px;height:19px;background:#e1e1e1;border:1px solid #adadad"></div>
<div class="r m bl" style="left:1190px;top:108px;">Hide FPU</div>
<div class="a" style="left:1180px;top:123px;width:493px;height:172px;background:#fff8f0;"></div>
<div class="a" style="left:1179px;top:123px;width:1px;height:179px;background:#808080;"></div>
<div class="r m bl" style="left:1186px;top:126px;">R11</div>
<div class="r m red" style="left:1229px;top:126px;">0000040000000000</div>
<div class="r m bl" style="left:1186px;top:138px;">R12</div>
<div class="r m red" style="left:1229px;top:138px;">00000182628B8250</div>
<div class="r m bl" style="left:1186px;top:150px;">R13</div>
<div class="r m red" style="left:1229px;top:150px;">0000018268CEC1A0</div>
<div class="r m bl" style="left:1186px;top:162px;">R14</div>
<div class="r m red" style="left:1229px;top:162px;">00007FFE3CF04190</div>
<div class="r m bl" style="left:1376px;top:162px;">&amp;L"AccName"</div>
<div class="r m bl" style="left:1186px;top:174px;">R15</div>
<div class="r m bl" style="left:1229px;top:174px;">0000000000000000</div>
<div class="r m bl" style="left:1186px;top:198px;">RIP</div>
<div class="r m red" style="left:1229px;top:198px;">00007FFE3CE27570</div>
<div class="r m bl" style="left:1376px;top:198px;">&lt;dui70.NotifyAccessibilityEvent&gt;</div>
<div class="r m bl" style="left:1186px;top:222px;">RFLAGS</div>
<div class="r m red" style="left:1250px;top:222px;">0000000000000380</div>
<div class="r m bl" style="left:1187px;top:234px;">ZF</div>
<div class="r m red" style="left:1208px;top:234px;">0</div>
<div class="r m bl" style="left:1229px;top:234px;">PF</div>
<div class="r m red" style="left:1250px;top:234px;">0</div>
<div class="r m bl" style="left:1271px;top:234px;">AF</div>
<div class="r m bl" style="left:1292px;top:234px;">0</div>
<div class="r m bl" style="left:1187px;top:246px;">OF</div>
<div class="r m bl" style="left:1208px;top:246px;">0</div>
<div class="r m bl" style="left:1229px;top:246px;">SF</div>
<div class="r m red" style="left:1250px;top:246px;">1</div>
<div class="r m bl" style="left:1271px;top:246px;">DF</div>
<div class="r m bl" style="left:1292px;top:246px;">0</div>
<div class="r m bl" style="left:1187px;top:258px;">CF</div>
<div class="r m bl" style="left:1208px;top:258px;">0</div>
<div class="r m bl" style="left:1229px;top:258px;">TF</div>
<div class="r m red" style="left:1250px;top:258px;">1</div>
<div class="r m bl" style="left:1271px;top:258px;">IF</div>
<div class="r m bl" style="left:1292px;top:258px;">1</div>
<div class="r m bl" style="left:1187px;top:282px;">LastError  00000000 (ERROR_SUCCESS)</div>
<div class="a" style="left:1673px;top:123px;width:9px;height:173px;background:#f6f6f6;border-left:1px solid #808080"></div>
<div class="a" style="left:1675px;top:143px;width:6px;height:20px;background:#a6a6a6;"></div>
<div class="a" style="left:1180px;top:295px;width:493px;height:8px;background:#f6f6f6;border:1px solid #b0b0b0;border-left:none"></div>
<div class="a" style="left:1181px;top:297px;width:241px;height:5px;background:#a6a6a6;"></div>
<svg style="left:0;top:0" width="1684" height="548"><path d="M1187 244H1201" stroke="#b40000" stroke-width="2"/><path d="M1229 244H1243" stroke="#b40000" stroke-width="2"/><path d="M1271 244H1285" stroke="#b40000" stroke-width="2"/><path d="M1187 256H1201" stroke="#b40000" stroke-width="2"/><path d="M1229 256H1243" stroke="#b40000" stroke-width="2"/><path d="M1187 268H1201" stroke="#b40000" stroke-width="2"/></svg>
<div class="a" style="left:0px;top:303px;width:1177px;height:79px;background:#fff8f0;"></div>
<div class="a" style="left:0px;top:302px;width:1178px;height:1px;background:#828790;"></div>
<div class="a" style="left:1177px;top:302px;width:1px;height:81px;background:#828790;"></div>
<div class="a" style="left:0px;top:382px;width:1178px;height:1px;background:#828790;"></div>
<div class="r m bl" style="left:4px;top:304px;">dword ptr [dui70.00007FFE3CF86BBC]=1</div>
<div class="r m bl" style="left:4px;top:337px;">.text:00007FFE3CE2758C dui70.dll:$2758C #2698C &lt;NotifyAccessibilityEvent+1C&gt;</div>
<div class="a" style="left:1180px;top:306px;width:396px;height:19px;background:#e1e1e1;border:1px solid #adadad"></div>
<div class="a ui" style="left:1182.5px;top:309px;font-size:11.5px;line-height:14px;color:#000;letter-spacing:-0.174px;">Default (x64 fastcall)</div>
<div class="a" style="left:1579px;top:306px;width:35px;height:18px;background:#fff;border:1px solid #7a7a7a"></div>
<div class="a ui" style="left:1583px;top:309px;font-size:11.5px;line-height:14px;color:#000;">5</div>
<div class="a" style="left:1598px;top:307px;width:15px;height:16px;background:#f0f0f0;border:1px solid #c8c8c8"></div>
<div class="a" style="left:1617px;top:308px;width:13px;height:13px;background:#fff;border:1px solid #333"></div>
<div class="a ui" style="left:1634.7px;top:309px;font-size:10.5px;line-height:14px;color:#000;letter-spacing:-0.222px;">Unlocked</div>
<div class="a" style="left:1180px;top:326px;width:492px;height:46px;background:#fff8f0;"></div>
<div class="a" style="left:1179px;top:325px;width:504px;height:1px;background:#808080;"></div>
<div class="a" style="left:1179px;top:325px;width:1px;height:57px;background:#808080;"></div>
<div class="a" style="left:1180px;top:326px;width:492px;height:11px;background:#c0c0c0;"></div>
<div class="a" style="left:1180px;top:326px;width:492px;height:46px;overflow:hidden">
<div class="r m bl" style="left:4px;top:1px;">1: rcx 000000000000800C</div>
<div class="r m bl" style="left:4px;top:12px;">2: rdx 00000182615091E0 &lt;&amp;??_7Element@DirectUI@@6B@&gt;</div>
<div class="r m bl" style="left:4px;top:23px;">3: r8 00007FFE3CE00000 dui70.00007FFE3CE00000</div>
<div class="r m bl" style="left:4px;top:34px;">4: r9 0000018268CEC1A0</div>
<div class="r m bl" style="left:4px;top:45px;">5: [rsp+28] 0000000000000000</div>
</div>
<div class="a" style="left:1672px;top:326px;width:10px;height:46px;background:#f4f4f4;border-left:1px solid #c0c0c0"></div>
<div class="a" style="left:1674px;top:328px;width:6px;height:41px;background:#a6a6a6;"></div>
<div class="a" style="left:1180px;top:372px;width:492px;height:9px;background:#f4f4f4;border-top:1px solid #c0c0c0;border-right:1px solid #c0c0c0"></div>
<div class="a" style="left:1181px;top:374px;width:390px;height:6px;background:#a6a6a6;"></div>
<div class="a" style="left:1179px;top:381px;width:504px;height:1px;background:#b8b8b8;"></div>
<div class="a" style="left:1682px;top:325px;width:1px;height:57px;background:#d0d0d0;"></div>
<svg style="left:0;top:0" width="1684" height="548"><path d="M1562.500 313h7l-3.500 4z" fill="#111"/><path d="M1602.500 313.500l3-3.500 3 3.500zM1602.500 316.500l3 3.500 3-3.500z" fill="#111"/></svg>
<div class="a" style="left:0px;top:384px;width:81px;height:24px;background:#fff;border:1px solid #d9d9d9;border-bottom:none;border-left:none"></div>
<div class="a" style="left:80px;top:386px;width:79px;height:22px;background:#f0f0f0;border:1px solid #d9d9d9;border-bottom:none"></div>
<div class="a" style="left:158px;top:386px;width:81px;height:22px;background:#f0f0f0;border:1px solid #d9d9d9;border-bottom:none"></div>
<div class="a" style="left:238px;top:386px;width:81px;height:22px;background:#f0f0f0;border:1px solid #d9d9d9;border-bottom:none"></div>
<div class="a" style="left:318px;top:386px;width:81px;height:22px;background:#f0f0f0;border:1px solid #d9d9d9;border-bottom:none"></div>
<div class="a" style="left:398px;top:386px;width:85px;height:22px;background:#f0f0f0;border:1px solid #d9d9d9;border-bottom:none"></div>
<div class="a" style="left:482px;top:386px;width:74px;height:22px;background:#f0f0f0;border:1px solid #d9d9d9;border-bottom:none"></div>
<div class="a" style="left:555px;top:386px;width:73px;height:22px;background:#f0f0f0;border:1px solid #d9d9d9;border-bottom:none"></div>
<div class="a ui" style="left:30.8px;top:390px;font-size:10.5px;line-height:14px;color:#000;letter-spacing:-0.178px;">Dump 1</div>
<div class="a ui" style="left:110.6px;top:391px;font-size:10.75px;line-height:14px;color:#000;letter-spacing:-0.207px;">Dump 2</div>
<div class="a ui" style="left:190.2px;top:391px;font-size:10.75px;line-height:14px;color:#000;letter-spacing:-0.207px;">Dump 3</div>
<div class="a ui" style="left:270.2px;top:391px;font-size:11.0px;line-height:14px;color:#000;letter-spacing:-0.286px;">Dump 4</div>
<div class="a ui" style="left:350.5px;top:391px;font-size:10.75px;line-height:14px;color:#000;letter-spacing:-0.190px;">Dump 5</div>
<div class="a ui" style="left:431px;top:391px;font-size:11.5px;line-height:14px;color:#000;letter-spacing:-0.294px;">Watch 1</div>
<div class="a ui" style="left:514.7px;top:392px;font-size:10.25px;line-height:14px;color:#000;letter-spacing:-0.188px;">Locals</div>
<div class="a ui" style="left:587.5px;top:391px;font-size:11.5px;line-height:14px;color:#000;letter-spacing:-0.156px;">Struct</div>
<div class="a" style="left:0px;top:408px;width:1018px;height:1px;background:#828790;"></div>
<div class="a" style="left:0px;top:409px;width:1000px;height:73px;background:#fff8f0;"></div>
<div class="a" style="left:0px;top:409px;width:1000px;height:14px;background:#c0c0c0;"></div>
<div class="a" style="left:0px;top:422px;width:1000px;height:1px;background:#808080;"></div>
<div class="a" style="left:0px;top:423px;width:1000px;height:1px;background:#b4b0ac;"></div>
<div class="a" style="left:119px;top:409px;width:1px;height:14px;background:#808080;"></div>
<div class="a" style="left:120px;top:409px;width:1px;height:13px;background:#e8e8e8;"></div>
<div class="a" style="left:456px;top:409px;width:1px;height:14px;background:#808080;"></div>
<div class="a" style="left:457px;top:409px;width:1px;height:13px;background:#e8e8e8;"></div>
<div class="a" style="left:576px;top:409px;width:1px;height:14px;background:#808080;"></div>
<div class="a" style="left:577px;top:409px;width:1px;height:13px;background:#e8e8e8;"></div>
<div class="r m bl" style="left:4px;top:412px;">Address</div>
<div class="r m bl" style="left:124px;top:412px;">Hex</div>
<div class="r m bl" style="left:461px;top:412px;">ASCII</div>
<div class="a" style="left:119px;top:423px;width:1px;height:59px;background:#808080;"></div>
<div class="a" style="left:456px;top:423px;width:1px;height:59px;background:#808080;"></div>
<div class="a" style="left:576px;top:423px;width:1px;height:59px;background:#808080;"></div>
<div class="a" style="left:204px;top:423px;width:1px;height:59px;background:#808080;"></div>
<div class="a" style="left:288px;top:423px;width:1px;height:59px;background:#808080;"></div>
<div class="a" style="left:372px;top:423px;width:1px;height:59px;background:#808080;"></div>
<div class="a" style="left:0;top:424px;width:1000px;height:58px;overflow:hidden">
<div class="r m bl" style="left:4px;top:1px;">00007FFE3CF86BBC</div>
<div class="a" style="left:120px;top:0px;width:21px;height:11px;background:#c0c0c0;"></div>
<div class="r m " style="left:124px;top:1px;color:#008000"><span class="red">01</span> 00 00 00 00 00 00 00 00 00 00 00 00 00 00 00</div>
<div class="a" style="left:461px;top:0px;width:7px;height:11px;background:#c0c0c0;"></div>
<div class="r m " style="left:461px;top:1px;color:#008000"><span class="red">.</span>...............</div>
<div class="r m bl" style="left:4px;top:12px;">00007FFE3CF86BCC</div>
<div class="r m " style="left:124px;top:12px;color:#008000">00 00 00 00 00 00 00 00 00 00 00 00 00 00 00 00</div>
<div class="r m " style="left:461px;top:12px;color:#008000">................</div>
<div class="r m bl" style="left:4px;top:23px;">00007FFE3CF86BDC</div>
<div class="r m " style="left:124px;top:23px;color:#008000">00 00 00 00 00 00 00 00 00 00 00 00 00 00 00 00</div>
<div class="r m " style="left:461px;top:23px;color:#008000">................</div>
<div class="r m bl" style="left:4px;top:34px;">00007FFE3CF86BEC</div>
<div class="r m " style="left:124px;top:34px;color:#008000">00 00 00 00 00 00 00 00 00 00 00 00 00 00 00 00</div>
<div class="r m " style="left:461px;top:34px;color:#008000">................</div>
<div class="r m bl" style="left:4px;top:45px;">00007FFE3CF86BFC</div>
<div class="r m " style="left:124px;top:45px;color:#008000">00 00 00 00 00 00 00 00 00 00 00 00 00 00 00 00</div>
<div class="r m " style="left:461px;top:45px;color:#008000">................</div>
<div class="r m bl" style="left:4px;top:56px;">00007FFE3CF86C0C</div>
<div class="r m " style="left:124px;top:56px;color:#008000">00 00 00 00 00 00 00 00 00 00 00 00 00 00 00 00</div>
<div class="r m " style="left:461px;top:56px;color:#008000">................</div>
</div>
<div class="a" style="left:1000px;top:409px;width:17px;height:90px;background:#f0f0f0;"></div>
<div class="a" style="left:1000px;top:442px;width:17px;height:18px;background:#cdcdcd;"></div>
<div class="a" style="left:0px;top:482px;width:1017px;height:17px;background:#f0f0f0;"></div>
<div class="a" style="left:17px;top:482px;width:638px;height:17px;background:#cdcdcd;"></div>
<div class="a" style="left:1017px;top:408px;width:1px;height:92px;background:#828790;"></div>
<div class="a" style="left:0px;top:499px;width:1018px;height:1px;background:#828790;"></div>
<svg style="left:0;top:0" width="1684" height="548"><g transform="translate(10.5,387)"><rect x="3.500" y="1.500" width="12.500" height="10" rx="1.500" fill="#d4d4d4" stroke="#8a8a8a" stroke-width="0.800"/><path d="M6.500 2.500v8M9.500 2.500v8M12.500 2.500v8" stroke="#9a9a9a" stroke-width="1.100"/><rect x="0.500" y="4.500" width="3.500" height="7" fill="#f0b428" stroke="#b07a10" stroke-width="0.700"/><rect x="1.200" y="6" width="2" height="2.500" fill="#4a7ad0"/><path d="M0 11.800h16" stroke="#555" stroke-width="1"/><circle cx="3" cy="13" r="1.700" fill="#333"/><circle cx="13" cy="13" r="1.700" fill="#333"/></g><g transform="translate(90.8,388)"><rect x="3.500" y="1.500" width="12.500" height="10" rx="1.500" fill="#d4d4d4" stroke="#8a8a8a" stroke-width="0.800"/><path d="M6.500 2.500v8M9.500 2.500v8M12.500 2.500v8" stroke="#9a9a9a" stroke-width="1.100"/><rect x="0.500" y="4.500" width="3.500" height="7" fill="#f0b428" stroke="#b07a10" stroke-width="0.700"/><rect x="1.200" y="6" width="2" height="2.500" fill="#4a7ad0"/><path d="M0 11.800h16" stroke="#555" stroke-width="1"/><circle cx="3" cy="13" r="1.700" fill="#333"/><circle cx="13" cy="13" r="1.700" fill="#333"/></g><g transform="translate(170.9,388)"><rect x="3.500" y="1.500" width="12.500" height="10" rx="1.500" fill="#d4d4d4" stroke="#8a8a8a" stroke-width="0.800"/><path d="M6.500 2.500v8M9.500 2.500v8M12.500 2.500v8" stroke="#9a9a9a" stroke-width="1.100"/><rect x="0.500" y="4.500" width="3.500" height="7" fill="#f0b428" stroke="#b07a10" stroke-width="0.700"/><rect x="1.200" y="6" width="2" height="2.500" fill="#4a7ad0"/><path d="M0 11.800h16" stroke="#555" stroke-width="1"/><circle cx="3" cy="13" r="1.700" fill="#333"/><circle cx="13" cy="13" r="1.700" fill="#333"/></g><g transform="translate(250.9,388)"><rect x="3.500" y="1.500" width="12.500" height="10" rx="1.500" fill="#d4d4d4" stroke="#8a8a8a" stroke-width="0.800"/><path d="M6.500 2.500v8M9.500 2.500v8M12.500 2.500v8" stroke="#9a9a9a" stroke-width="1.100"/><rect x="0.500" y="4.500" width="3.500" height="7" fill="#f0b428" stroke="#b07a10" stroke-width="0.700"/><rect x="1.200" y="6" width="2" height="2.500" fill="#4a7ad0"/><path d="M0 11.800h16" stroke="#555" stroke-width="1"/><circle cx="3" cy="13" r="1.700" fill="#333"/><circle cx="13" cy="13" r="1.700" fill="#333"/></g><g transform="translate(330.8,388)"><rect x="3.500" y="1.500" width="12.500" height="10" rx="1.500" fill="#d4d4d4" stroke="#8a8a8a" stroke-width="0.800"/><path d="M6.500 2.500v8M9.500 2.500v8M12.500 2.500v8" stroke="#9a9a9a" stroke-width="1.100"/><rect x="0.500" y="4.500" width="3.500" height="7" fill="#f0b428" stroke="#b07a10" stroke-width="0.700"/><rect x="1.200" y="6" width="2" height="2.500" fill="#4a7ad0"/><path d="M0 11.800h16" stroke="#555" stroke-width="1"/><circle cx="3" cy="13" r="1.700" fill="#333"/><circle cx="13" cy="13" r="1.700" fill="#333"/></g><g transform="translate(410.5,388)"><circle cx="3.300" cy="3.300" r="2.600" fill="#c88a3a" stroke="#8a5a1a" stroke-width="0.600"/><circle cx="12.700" cy="3.300" r="2.600" fill="#c88a3a" stroke="#8a5a1a" stroke-width="0.600"/><ellipse cx="8" cy="8.800" rx="7" ry="6.300" fill="#dca050" stroke="#8a5a1a" stroke-width="0.700"/><ellipse cx="8" cy="11.300" rx="3.200" ry="2.600" fill="#fbe8cc"/><circle cx="5.500" cy="7.800" r="1.100" fill="#222"/><circle cx="10.500" cy="7.800" r="1.100" fill="#222"/><ellipse cx="8" cy="10.300" rx="1.100" ry="0.800" fill="#222"/><path d="M6.800 12.300q1.200 1.200 2.400 0" stroke="#6a2a1a" stroke-width="0.800" fill="none"/></g><text x="494.500" y="400" font-family="Liberation Serif,serif" font-size="11" fill="#333" textLength="16.500" lengthAdjust="spacingAndGlyphs">[<tspan font-style="italic" fill="#7a2a4a">x</tspan>=]</text><g transform="translate(568,388)"><path d="M3.500 15L10 5.500a3 3 0 1 0-5.200-2.300" fill="none" stroke="#e23838" stroke-width="2.800" stroke-linecap="round"/><path d="M3.500 15L10 5.500a3 3 0 1 0-5.200-2.300" fill="none" stroke="#fff" stroke-width="2" stroke-dasharray="1.500 2"/></g><path d="M122.500 411.500C112 411 101 415 99.600 424C98.500 432 104 438 112 441C121 444.500 134 444 143 441C152 437 157.500 430 157 422C156.500 414 151 408 144 405.500C137 403 128 403 121 406.500C119.500 407.500 118.500 408.500 118 410" stroke="#f01010" stroke-width="2.500" fill="none" stroke-linecap="round"/><path d="M1004.5 419.5L1008.5 415.5L1012.5 419.5" stroke="#505050" stroke-width="1.900" fill="none"/><path d="M1004.5 472L1008.5 476L1012.5 472" stroke="#505050" stroke-width="1.900" fill="none"/><path d="M10 486.5L6 490.5L10 494.5" stroke="#505050" stroke-width="1.900" fill="none"/><path d="M990 486.5L994 490.5L990 494.5" stroke="#505050" stroke-width="1.900" fill="none"/></svg>
<div class="a" style="left:1020px;top:385px;width:645px;height:97px;background:#fff8f0;"></div>
<div class="a" style="left:1019px;top:384px;width:1px;height:116px;background:#828790;"></div>
<div class="a" style="left:1019px;top:384px;width:664px;height:1px;background:#828790;"></div>
<div class="a" style="left:1020px;top:385px;width:119px;height:11px;background:#000;"></div>
<div class="a" style="left:1143px;top:385px;width:522px;height:11px;background:#c0c0c0;"></div>
<div class="a" style="left:1141px;top:385px;width:2px;height:97px;background:#0000ff;"></div>
<div class="a" style="left:1143px;top:385px;width:4px;height:2px;background:#0000ff;"></div>
<div class="a" style="left:1261px;top:385px;width:1px;height:97px;background:#808080;"></div>
<div class="a" style="left:1020px;top:385px;width:645px;height:97px;overflow:hidden">
<div class="r m " style="left:4px;top:1px;color:#fff">00000065842EED28</div>
<div class="r m bl" style="left:127px;top:1px;">00007FFE3CE251AB</div>
<div class="r m red" style="left:246px;top:1px;">return to dui70.sub_7FFE3CE2519E+D from dui70.sub_7FFE3CE</div>
<div class="r m " style="left:4px;top:12px;color:#808080">00000065842EED30</div>
<div class="r m bl" style="left:127px;top:12px;">003801825AAE0000</div>
<div class="r m " style="left:4px;top:23px;color:#808080">00000065842EED38</div>
<div class="r m bl" style="left:127px;top:23px;">00007FFE53872843</div>
<div class="r m red" style="left:246px;top:23px;">return to duser.00007FFE53872843 from duser.00007FFE53872</div>
<div class="r m " style="left:4px;top:34px;color:#808080">00000065842EED40</div>
<div class="r m bl" style="left:127px;top:34px;">0000018261399A00</div>
<div class="r m " style="left:4px;top:45px;color:#808080">00000065842EED48</div>
<div class="r m bl" style="left:127px;top:45px;">00007FFE7F8AEA43</div>
<div class="r m red" style="left:246px;top:45px;">return to gdi32full.00007FFE7F8AEA43 from ???</div>
<div class="r m " style="left:4px;top:56px;color:#808080">00000065842EED50</div>
<div class="r m bl" style="left:127px;top:56px;">0000000000000000</div>
<div class="r m " style="left:4px;top:67px;color:#808080">00000065842EED58</div>
<div class="r m bl" style="left:127px;top:67px;">0000000000000000</div>
<div class="r m " style="left:4px;top:78px;color:#808080">00000065842EED60</div>
<div class="r m bl" style="left:127px;top:78px;">00000182695975E0</div>
<div class="r m " style="left:4px;top:89px;color:#808080">00000065842EED68</div>
<div class="r m bl" style="left:127px;top:89px;">0000000000000000</div>
<div class="r m " style="left:4px;top:100px;color:#808080">00000065842EED70</div>
<div class="r m bl" style="left:127px;top:100px;">0000000000000001</div>
</div>
<div class="a" style="left:1665px;top:385px;width:17px;height:114px;background:#f0f0f0;"></div>
<div class="a" style="left:1665px;top:442px;width:17px;height:18px;background:#cdcdcd;"></div>
<div class="a" style="left:1020px;top:482px;width:645px;height:17px;background:#f0f0f0;"></div>
<div class="a" style="left:1037px;top:482px;width:176px;height:17px;background:#cdcdcd;"></div>
<div class="a" style="left:1019px;top:499px;width:664px;height:1px;background:#828790;"></div>
<div class="a" style="left:1682px;top:384px;width:1px;height:116px;background:#828790;"></div>
<svg style="left:0;top:0" width="1684" height="548"><path d="M1669.5 395.5L1673.5 391.5L1677.5 395.5" stroke="#505050" stroke-width="1.900" fill="none"/><path d="M1669.5 472L1673.5 476L1677.5 472" stroke="#505050" stroke-width="1.900" fill="none"/><path d="M1030 486.5L1026 490.5L1030 494.5" stroke="#505050" stroke-width="1.900" fill="none"/><path d="M1655 486.5L1659 490.5L1655 494.5" stroke="#505050" stroke-width="1.900" fill="none"/></svg>
<div class="a ui" style="left:1px;top:505.5px;font-size:10.5px;line-height:14px;color:#000;letter-spacing:-0.169px;">Command:</div>
<div class="a" style="left:55px;top:502px;width:1553px;height:20px;background:#fff;border:1px solid #7a7a7a"></div>
<div class="a" style="left:1608px;top:502px;width:73px;height:20px;background:#e1e1e1;border:1px solid #adadad"></div>
<div class="a ui" style="left:1611.4px;top:505.5px;font-size:11.5px;line-height:14px;color:#000;letter-spacing:-0.205px;">Default</div>
<div class="a" style="left:0px;top:524px;width:1684px;height:23px;background:#c0c0c0;"></div>
<div class="a" style="left:0px;top:546px;width:1684px;height:2px;background:#2a2a2a;"></div>
<div class="a" style="left:1px;top:527px;width:64px;height:18px;background:#ffff00;"></div>
<div class="a ui" style="left:14.5px;top:528.5px;font-size:10.75px;line-height:14px;color:#ff0000;letter-spacing:-0.243px;">Paused</div>
<div class="a" style="left:71px;top:527px;width:1421px;height:18px;background:#c0c0c0;border:1px solid #e8e8e8;border-top-color:#808080;border-left-color:#808080"></div>
<div class="a ui" style="left:74.5px;top:529px;font-size:11.5px;line-height:14px;color:#000;letter-spacing:-0.297px;">INT3 breakpoint at &lt;dui70.NotifyAccessibilityEvent&gt; (00007FFE3CE27570)!</div>
<div class="a" style="left:1498px;top:527px;width:184px;height:18px;background:#c0c0c0;border:1px solid #e8e8e8;border-top-color:#808080;border-left-color:#808080"></div>
<div class="a ui" style="left:1501.4px;top:529px;font-size:11.5px;line-height:14px;color:#000;letter-spacing:-0.287px;">Time Wasted Debugging: 0:04:23:55</div>
<svg style="left:0;top:0" width="1684" height="548"><path d="M1668 510h7l-3.500 4z" fill="#111"/></svg>
<div class="a" style="left:1683px;top:0;width:1px;height:548px;background:#3a3a3a"></div><!--EDGE-->
</body></html>
